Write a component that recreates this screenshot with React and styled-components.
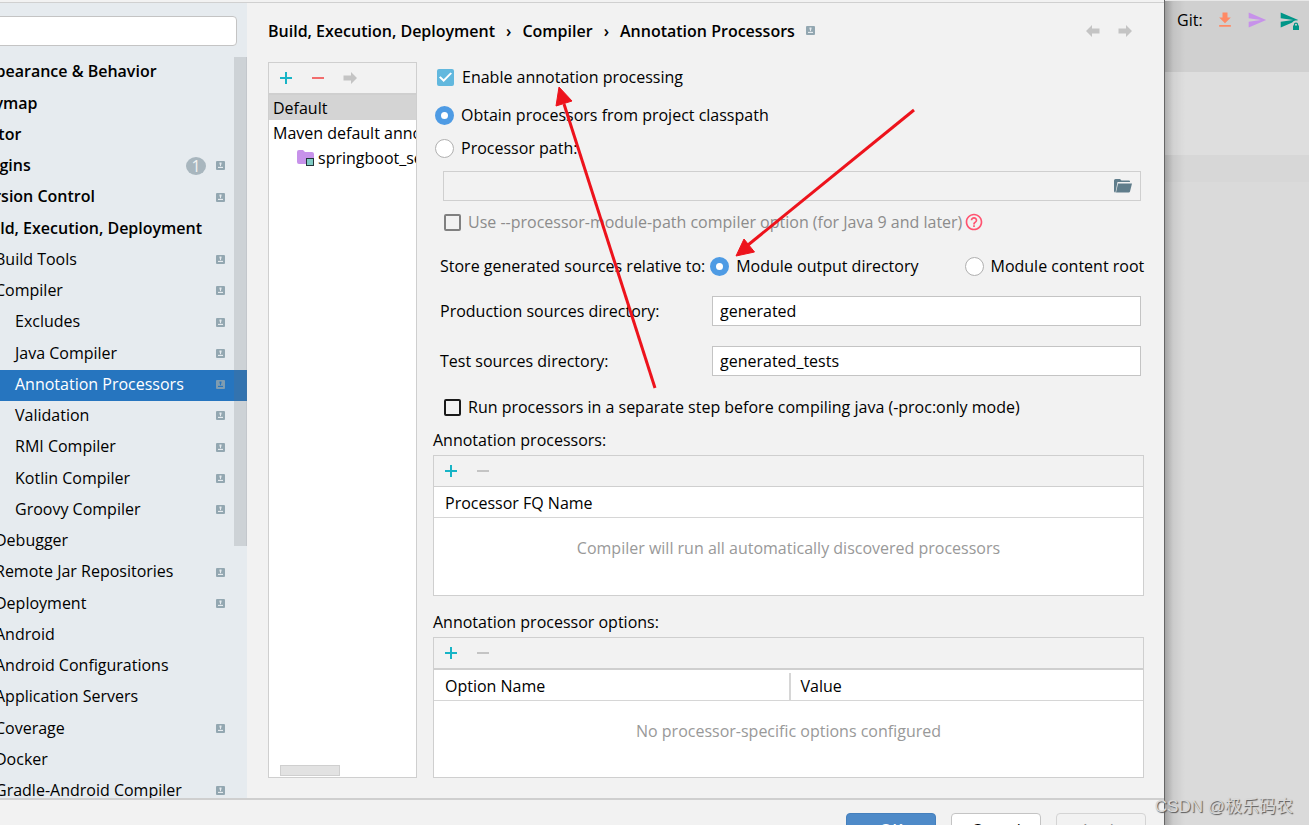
import styled, { createGlobalStyle } from "styled-components";
import { MdFileDownload, MdHelpOutline, MdSend } from "react-icons/md";

const GlobalStyle = createGlobalStyle`
  * {
    box-sizing: border-box;
  }
  body {
    margin: 0;
    background: #dadada;
    color: #000;
    font: 16px/24px "Open Sans", "Noto Sans", sans-serif;
    overflow: hidden;
  }
  button, input, table {
    font: inherit;
    color: inherit;
  }
`;

const Screen = styled.div`
  position: relative;
  display: flex;
  height: 100vh;
  overflow: hidden;
`;

const Dialog = styled.main`
  flex: 1;
  min-width: 0;
  display: flex;
  flex-direction: column;
  padding-top: 2px;
  background: #f2f2f2;
  border-right: 1px solid #666;
`;

const Columns = styled.div`
  flex: 1;
  min-height: 0;
  display: flex;
  border-top: 1px solid #d0d0d0;
`;

const Sidebar = styled.aside`
  position: relative;
  flex: 0 0 287px;
  margin-left: -40px;
  padding-top: 13px;
  background: #e6ebef;
  overflow: hidden;
`;

const Search = styled.input`
  display: block;
  width: 277px;
  height: 30px;
  padding: 0 8px;
  background: #fff;
  border: 1px solid #c4c4c4;
  border-radius: 4px;
  outline: none;
`;

const Tree = styled.ul`
  list-style: none;
  margin: 11px 0 0;
  padding: 0;
`;

const TreeRow = styled.li`
  display: flex;
  align-items: center;
  gap: 10px;
  height: 31px;
  padding: 0 22px 2px ${({ $level }) => 15 + $level * 20}px;
  font-weight: ${({ $level }) => ($level === 0 ? 600 : 400)};
  color: ${({ $selected }) => ($selected ? "#fff" : "#000")};
  background: ${({ $selected }) => ($selected ? "#2675bf" : "transparent")};
  white-space: nowrap;

  &:nth-child(4n + 1) {
    height: 32px;
  }
`;

const RowText = styled.span`
  flex: 1;
  padding-bottom: 2px;
`;

const Count = styled.span`
  width: 20px;
  height: 18px;
  border-radius: 50%;
  background: #a8b6be;
  color: #f2f2f2;
  font-weight: 400;
  line-height: 18px;
  text-align: center;
`;

const TreeScroll = styled.div`
  position: absolute;
  top: 54px;
  right: 0;
  width: 13px;
  height: 489px;
  background: rgba(105, 110, 115, 0.2);
  border-right: 1px solid rgba(105, 110, 115, 0.1);
`;

const Content = styled.section`
  flex: 1;
  min-width: 0;
  display: flex;
  flex-direction: column;
  padding: 0 20px 20px 21px;
`;

const Header = styled.header`
  display: flex;
  align-items: center;
  height: 59px;
  padding-bottom: 4px;
`;

const Crumbs = styled.nav`
  flex: 1;
  display: flex;
  align-items: center;
  gap: 11px;
  font-weight: 600;
`;

const Crumb = styled.a`
  color: inherit;
  text-decoration: none;
`;

const IconButton = styled.button`
  display: flex;
  align-items: center;
  justify-content: center;
  width: 24px;
  height: 24px;
  padding: 0;
  border: 0;
  background: none;
  color: ${({ $color }) => $color || "#c4c4c4"};
`;

const HistoryButtons = styled.div`
  display: flex;
  gap: 8px;
  margin-right: 7px;
`;

const Body = styled.div`
  flex: 1;
  min-height: 0;
  display: flex;
  gap: 16px;
`;

const Profiles = styled.div`
  flex: 0 0 149px;
  display: flex;
  flex-direction: column;
  background: #fff;
  border: 1px solid #cfcfcf;
  overflow: hidden;
`;

const Toolbar = styled.div`
  display: flex;
  align-items: center;
  gap: 8px;
  height: ${({ $line = 1 }) => 30 + $line}px;
  padding-left: 5px;
  background: #f2f2f2;
  border-bottom: ${({ $line = 1 }) => $line}px solid #cfcfcf;
`;

const Profile = styled.div`
  display: flex;
  align-items: center;
  gap: 4px;
  height: 25px;
  padding-left: ${({ $nested }) => ($nested ? 28 : 4)}px;
  background: ${({ $selected }) => ($selected ? "#d4d4d4" : "#fff")};
  white-space: nowrap;

  svg {
    flex: none;
  }
`;

const ProfilesScroll = styled.div`
  width: 60px;
  height: 11px;
  margin: auto 0 1px 11px;
  background: #e2e2e2;
  border: 1px solid #cfcfcf;
`;

const Form = styled.form`
  flex: 1;
  min-width: 0;
  display: flex;
  flex-direction: column;
`;

const Line = styled.div`
  display: flex;
  align-items: center;
  height: 30px;
  margin-top: ${({ $top = 0 }) => $top}px;
  padding-left: ${({ $indent = 2 }) => $indent}px;
  white-space: nowrap;
`;

const Choice = styled.label`
  display: flex;
  align-items: center;
  gap: ${({ $gap = 7 }) => $gap}px;
  margin-left: ${({ $left = 0 }) => $left}px;
  color: ${({ $disabled }) => ($disabled ? "#8c8c8c" : "#000")};
`;

const Radio = styled.input.attrs({ type: "radio" })`
  appearance: none;
  width: 19px;
  height: 19px;
  margin: 0;
  border: 1px solid #b0b0b0;
  border-radius: 50%;
  background: #fff;

  &:checked {
    border: 6px solid #4e9be4;
  }
`;

const Check = styled.input.attrs({ type: "checkbox" })`
  appearance: none;
  display: flex;
  align-items: center;
  justify-content: center;
  width: 17px;
  height: 17px;
  margin: 0;
  border: 2px solid #1a1a1a;
  border-radius: 2px;

  &:disabled {
    border-color: #808080;
  }
  &:checked {
    border-color: #62b8de;
    background: #62b8de;
  }
  &:checked::after {
    content: "";
    width: 13px;
    height: 10px;
    background: #fff;
    clip-path: polygon(0 54%, 12% 42%, 36% 72%, 88% 4%, 100% 16%, 36% 100%);
  }
`;

const PathField = styled.div`
  display: flex;
  align-items: center;
  height: 30px;
  margin: 8px 3px 0 10px;
  padding-right: 5px;
  border: 1px solid #cfcfcf;
`;

const PathInput = styled.input`
  flex: 1;
  min-width: 0;
  border: 0;
  background: none;
  outline: none;
`;

const FieldLabel = styled.label`
  flex: 0 0 272px;
`;

const TextField = styled.input`
  flex: 1;
  min-width: 0;
  height: 30px;
  margin-right: 3px;
  padding: 0 7px;
  background: #fff;
  border: 1px solid #c4c4c4;
  outline: none;
`;

const PanelTitle = styled.div`
  margin-top: ${({ $top }) => $top}px;
  padding-bottom: 3px;
`;

const Panel = styled.div`
  flex: 1;
  background: #fff;
  border: 1px solid #cfcfcf;
`;

const Grid = styled.table`
  width: 100%;
  table-layout: fixed;
  border-collapse: separate;
  border-spacing: 0;
`;

const HeadCell = styled.th`
  height: 31px;
  padding: 2px 0 0;
  border-bottom: 1px solid #d6d6d6;
  font-weight: 400;
  line-height: 27px;
  text-align: left;

  span {
    display: block;
    padding-left: 11px;
  }
  & + & span {
    padding-left: 10px;
    border-left: 2px solid #d6d6d6;
  }
`;

const EmptyCell = styled.td`
  padding: 18px 0 0;
  color: #999;
  text-align: center;
`;

const Footer = styled.footer`
  flex: 0 0 27px;
  display: flex;
  align-items: flex-start;
  justify-content: flex-end;
  gap: 15px;
  padding: 13px 18px 0;
  border-top: 2px solid #cfcfcf;
  overflow: hidden;
`;

const Button = styled.button`
  flex: none;
  width: 90px;
  height: 34px;
  padding: 0;
  background: #fff;
  border: 1px solid #c4c4c4;
  border-radius: 4px;

  &:disabled {
    background: #f2f2f2;
    border-color: #d4d4d4;
    color: #8c8c8c;
  }
`;

const PrimaryButton = styled(Button)`
  background: #4e8ac8;
  border-color: #4580bd;
  color: #fff;
  font-weight: 600;
`;

const Editor = styled.div`
  flex: 0 0 144px;
  display: flex;
  flex-direction: column;
  background: linear-gradient(to right, rgba(0, 0, 0, 0.25), rgba(0, 0, 0, 0.07) 8px, transparent 20px), #dadada;
`;

const GitBar = styled.div`
  display: flex;
  align-items: flex-start;
  gap: 12px;
  height: 72px;
  padding: 7px 0 0 12px;
  border-top: 1px solid #e8e8e8;
  background: rgba(0, 0, 0, 0.045);
`;

const GitButton = styled(IconButton)`
  width: 20px;
`;

const EditorBand = styled.div`
  height: ${({ $height }) => $height}px;
  background: ${({ $color }) => $color};
`;

const Arrows = styled.svg`
  position: absolute;
  top: 0;
  left: 0;
  pointer-events: none;
`;

const Watermark = styled.div`
  position: absolute;
  right: 16px;
  bottom: 6px;
  color: #d8d8d8;
  font: 17px/24px "Liberation Sans", "Noto Sans CJK SC", sans-serif;
  text-shadow: 1px 1px 1px #555;
`;

const tree = [
  { text: "Appearance & Behavior", level: 0 },
  { text: "Keymap", level: 0 },
  { text: "Editor", level: 0 },
  { text: "Plugins", level: 0, count: 1, project: true },
  { text: "Version Control", level: 0, project: true },
  { text: "Build, Execution, Deployment", level: 0 },
  { text: "Build Tools", level: 1, project: true },
  { text: "Compiler", level: 1, project: true },
  { text: "Excludes", level: 2, project: true },
  { text: "Java Compiler", level: 2, project: true },
  { text: "Annotation Processors", level: 2, project: true, selected: true },
  { text: "Validation", level: 2, project: true },
  { text: "RMI Compiler", level: 2, project: true },
  { text: "Kotlin Compiler", level: 2, project: true },
  { text: "Groovy Compiler", level: 2, project: true },
  { text: "Debugger", level: 1 },
  { text: "Remote Jar Repositories", level: 1, project: true },
  { text: "Deployment", level: 1, project: true },
  { text: "Android", level: 1 },
  { text: "Android Configurations", level: 1 },
  { text: "Application Servers", level: 1 },
  { text: "Coverage", level: 1, project: true },
  { text: "Docker", level: 1 },
  { text: "Gradle-Android Compiler", level: 1, project: true },
];

const ProjectIcon = ({ selected }) => (
  <svg width="9" height="9" viewBox="0 0 9 9">
    <rect width="9" height="9" rx="1" fill={selected ? "#7f9cb0" : "#93a7b1"} />
    <path d="M3.500 1.500h2v2H5V5.500h2V7H2V5.500h2v-2h-.5z" fill={selected ? "#2675bf" : "#e6ebef"} />
    <path d="M2 5h5v.7H2z" fill={selected ? "#7f9cb0" : "#93a7b1"} />
  </svg>
);

const PlusIcon = () => (
  <svg width="12" height="12" viewBox="0 0 12 12">
    <path d="M5 0h2v5h5v2H7v5H5V7H0V5h5z" fill="#17b4c6" />
  </svg>
);

const MinusIcon = () => (
  <svg width="12" height="12" viewBox="0 0 12 12">
    <path d="M0 5h12v2H0z" fill="currentColor" />
  </svg>
);

const ArrowIcon = ({ back }) => (
  <svg width="14" height="12" viewBox="0 0 14 12">
    <path d={back ? "M0 6l6-6v3.500h7.500v5H6V12z" : "M14 6L8 0v3.500H.5v5H8V12z"} fill="currentColor" />
  </svg>
);

const FolderIcon = () => (
  <svg width="18" height="14" viewBox="0 0 18 14">
    <path d="M0 1.500Q0 0 1.500 0H6l1.500 1.500H15q1 0 1 1V3H3.500L1.500 13.500Q0 13.500 0 12z" fill="#607d8b" />
    <path d="M4 4.500h14l-2 8q-.3 1-1.300 1H2z" fill="#607d8b" />
  </svg>
);

const ModuleIcon = () => (
  <svg width="17" height="16" viewBox="0 0 17 16">
    <path d="M0 2q0-2 2-2h4l2 2h7q2 0 2 2v8q0 2-2 2H2q-2 0-2-2z" fill="#c792ea" />
    <rect x="9.500" y="8.500" width="7" height="7" fill="#80cbc4" stroke="#24343a" />
  </svg>
);

const LockedSendIcon = () => (
  <svg width="20" height="20" viewBox="0 0 20 20">
    <path d="M1.700 17.500L19.200 10 1.700 2.500V8.300L14.200 10 1.700 11.700z" fill="#009688" />
    <path d="M13 20v-6.500a4 4 0 0 1 7-1.500v8z" fill="#d0d0d0" />
    <path d="M14 20v-4.500h.8V14.700a2.200 2.200 0 0 1 4.400 0v.8h.8V20zM16 15.500h2v-.8a1 1 0 0 0-2 0z" fill="#009688" />
  </svg>
);

const App = () => {
  return (
    <>
      <GlobalStyle />
      <Screen>
        <Dialog>
          <Columns>
            <Sidebar>
              <Search type="text" aria-label="Search settings" />
              <Tree>
                {tree.map(({ text, level, count, project, selected }) => (
                  <TreeRow key={text} $level={level} $selected={selected}>
                    <RowText>{text}</RowText>
                    {count && <Count>{count}</Count>}
                    {project && <ProjectIcon selected={selected} />}
                  </TreeRow>
                ))}
              </Tree>
              <TreeScroll />
            </Sidebar>
            <Content>
              <Header>
                <Crumbs>
                  <Crumb href="#build">Build, Execution, Deployment</Crumb>
                  <span>›</span>
                  <Crumb href="#compiler">Compiler</Crumb>
                  <span>›</span>
                  <Crumb href="#processors">Annotation Processors</Crumb>
                  <ProjectIcon />
                </Crumbs>
                <HistoryButtons>
                  <IconButton aria-label="Back"><ArrowIcon back /></IconButton>
                  <IconButton aria-label="Forward"><ArrowIcon /></IconButton>
                </HistoryButtons>
              </Header>
              <Body>
                <Profiles>
                  <Toolbar $line={2}>
                    <IconButton aria-label="Add profile"><PlusIcon /></IconButton>
                    <IconButton aria-label="Remove profile" $color="#f26d6d"><MinusIcon /></IconButton>
                    <IconButton aria-label="Move to"><ArrowIcon /></IconButton>
                  </Toolbar>
                  <Profile $selected>Default</Profile>
                  <Profile>Maven default annotation</Profile>
                  <Profile $nested>
                    <ModuleIcon />
                    springboot_security
                  </Profile>
                  <ProfilesScroll />
                </Profiles>
                <Form>
                  <Line $indent={4}>
                    <Choice $gap={8}>
                      <Check defaultChecked />
                      Enable annotation processing
                    </Choice>
                  </Line>
                  <Line $top={8}>
                    <Choice>
                      <Radio name="source" defaultChecked />
                      Obtain processors from project classpath
                    </Choice>
                  </Line>
                  <Line $top={3}>
                    <Choice>
                      <Radio name="source" />
                      Processor path:
                    </Choice>
                  </Line>
                  <PathField>
                    <PathInput type="text" aria-label="Processor path" disabled />
                    <IconButton type="button" aria-label="Browse"><FolderIcon /></IconButton>
                  </PathField>
                  <Line $top={6} $indent={11}>
                    <Choice $disabled>
                      <Check disabled />
                      Use --processor-module-path compiler option (for Java 9 and later)
                    </Choice>
                    <IconButton type="button" aria-label="Help" $color="#ff5370"><MdHelpOutline size={20} /></IconButton>
                  </Line>
                  <Line $top={14} $indent={7}>
                    <span>Store generated sources relative to:</span>
                    <Choice $left={5}>
                      <Radio name="relative" defaultChecked />
                      Module output directory
                    </Choice>
                    <Choice $left={46}>
                      <Radio name="relative" />
                      Module content root
                    </Choice>
                  </Line>
                  <Line $top={15} $indent={7}>
                    <FieldLabel htmlFor="production">Production sources directory:</FieldLabel>
                    <TextField id="production" type="text" defaultValue="generated" />
                  </Line>
                  <Line $top={20} $indent={7}>
                    <FieldLabel htmlFor="test">Test sources directory:</FieldLabel>
                    <TextField id="test" type="text" defaultValue="generated_tests" />
                  </Line>
                  <Line $top={16} $indent={11}>
                    <Choice>
                      <Check />
                      Run processors in a separate step before compiling java (-proc:only mode)
                    </Choice>
                  </Line>
                  <PanelTitle $top={6}>Annotation processors:</PanelTitle>
                  <Panel>
                    <Toolbar>
                      <IconButton type="button" aria-label="Add processor"><PlusIcon /></IconButton>
                      <IconButton type="button" aria-label="Remove processor"><MinusIcon /></IconButton>
                    </Toolbar>
                    <Grid>
                      <thead>
                        <tr>
                          <HeadCell><span>Processor FQ Name</span></HeadCell>
                        </tr>
                      </thead>
                      <tbody>
                        <tr>
                          <EmptyCell>Compiler will run all automatically discovered processors</EmptyCell>
                        </tr>
                      </tbody>
                    </Grid>
                  </Panel>
                  <PanelTitle $top={14}>Annotation processor options:</PanelTitle>
                  <Panel>
                    <Toolbar $line={2}>
                      <IconButton type="button" aria-label="Add option"><PlusIcon /></IconButton>
                      <IconButton type="button" aria-label="Remove option"><MinusIcon /></IconButton>
                    </Toolbar>
                    <Grid>
                      <thead>
                        <tr>
                          <HeadCell><span>Option Name</span></HeadCell>
                          <HeadCell><span>Value</span></HeadCell>
                        </tr>
                      </thead>
                      <tbody>
                        <tr>
                          <EmptyCell colSpan={2}>No processor-specific options configured</EmptyCell>
                        </tr>
                      </tbody>
                    </Grid>
                  </Panel>
                </Form>
              </Body>
            </Content>
          </Columns>
          <Footer>
            <PrimaryButton>OK</PrimaryButton>
            <Button>Cancel</Button>
            <Button disabled>Apply</Button>
          </Footer>
        </Dialog>
        <Editor>
          <GitBar>
            <span>Git:</span>
            <GitButton aria-label="Update project" $color="#ff8a65"><MdFileDownload size={20} /></GitButton>
            <GitButton aria-label="Commit" $color="#c792ea"><MdSend size={20} /></GitButton>
            <GitButton aria-label="Push"><LockedSendIcon /></GitButton>
          </GitBar>
          <EditorBand $height={83} $color="rgba(255, 255, 255, 0.12)" />
          <EditorBand $height={27} $color="rgba(0, 0, 0, 0.01)" />
        </Editor>
        <Arrows width="1309" height="825" viewBox="0 0 1309 825" fill="#ed131c" stroke="#ed131c">
          <path d="M655 388L564 104" strokeWidth="3" />
          <path d="M559 87l13 14-16 5z" />
          <path d="M914 110L748 245" strokeWidth="3" />
          <path d="M736 256l8-17 10.500 13z" />
        </Arrows>
        <Watermark>CSDN @极乐码农</Watermark>
      </Screen>
    </>
  );
};

export default App;
